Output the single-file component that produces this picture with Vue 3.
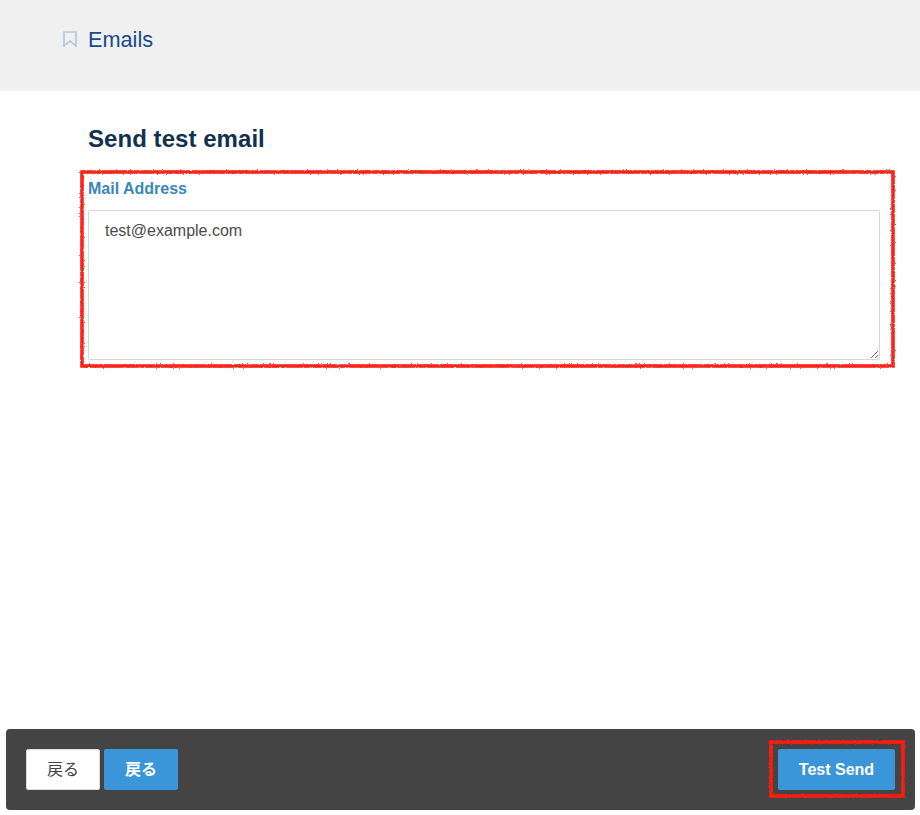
<script setup>
import { ref } from 'vue';

const mailAddress = ref('test@example.com');
</script>

<template>
  <div class="page">
    <header class="page-header">
      <svg class="bookmark" width="14" height="16" viewBox="0 0 14 16" fill="none">
        <path d="M1 1h12v14L7 10.2 1 15z" stroke="#b6c9dd" stroke-width="1.7" />
      </svg>
      <span class="page-title">Emails</span>
    </header>

    <main class="content">
      <h2>Send test email</h2>
      <div class="field">
        <label for="mail">Mail Address</label>
        <textarea id="mail" v-model="mailAddress"></textarea>
        <!-- red annotation around the field -->
        <svg class="mark mark-field" width="818" height="201" viewBox="0 0 818 201" fill="none">
          <defs>
            <filter id="rough" x="-2%" y="-5%" width="104%" height="110%">
              <feTurbulence type="fractalNoise" baseFrequency="0.7" numOctaves="2" seed="3" />
              <feDisplacementMap in="SourceGraphic" scale="2.5" />
              <feGaussianBlur stdDeviation="0.4" />
            </filter>
          </defs>
          <rect x="3" y="3" width="811" height="194" stroke="#ff2416" stroke-width="3.6" filter="url(#rough)" />
        </svg>
      </div>
    </main>

    <footer class="action-bar">
      <div class="left-actions">
        <button class="btn btn-white">戻る</button>
        <button class="btn btn-blue btn-back">戻る</button>
      </div>
      <div class="right-actions">
        <button class="btn btn-blue btn-send">Test Send</button>
        <svg class="mark mark-send" width="138" height="60" viewBox="0 0 138 60" fill="none">
          <rect x="3" y="3" width="132" height="54" stroke="#ff1a10" stroke-width="3.6" filter="url(#rough)" />
        </svg>
      </div>
    </footer>
  </div>
</template>

<style>
html, body {
  margin: 0;
  background: #fff;
  overflow: hidden;
}
</style>

<style scoped>
.page {
  height: 815px;
  display: flex;
  flex-direction: column;
  font-family: "Liberation Sans", "Noto Sans CJK JP", sans-serif;
  color: #444;
}
.page-header {
  height: 91px;
  flex: none;
  box-sizing: border-box;
  background: #f0f0f0;
  padding: 28px 0 0 63px;
  display: flex;
  align-items: flex-start;
  gap: 11px;
}
.bookmark {
  margin-top: 3px;
}
.page-title {
  font-size: 21.7px;
  line-height: 24px;
  color: #174a8b;
}
.content {
  flex: 1;
  padding: 34px 40px 0 88px;
}
h2 {
  margin: 0;
  font-size: 24px;
  line-height: 28px;
  font-weight: bold;
  letter-spacing: 0.05px;
  color: #12304f;
}
.field {
  position: relative;
  margin-top: 26px;
  display: flex;
  flex-direction: column;
}
label {
  font-size: 16px;
  line-height: 20px;
  font-weight: bold;
  color: #3a87b8;
  margin-bottom: 11px;
}
textarea {
  box-sizing: border-box;
  height: 150px;
  padding: 10px 16px;
  border: 1px solid #d6d6d6;
  border-radius: 2px;
  outline: none;
  font-family: inherit;
  font-size: 16px;
  line-height: 20px;
  color: #4c4c4c;
  resize: vertical;
}
.mark {
  position: absolute;
  pointer-events: none;
}
.mark-field {
  left: -9px;
  top: -10px;
}
.action-bar {
  flex: none;
  height: 81px;
  margin: 0 5px 5px 6px;
  box-sizing: border-box;
  padding: 20px;
  background: #444;
  border-radius: 4px;
  display: flex;
  justify-content: space-between;
}
.left-actions {
  display: flex;
  gap: 4px;
}
.right-actions {
  position: relative;
}
.btn {
  height: 41px;
  width: 74px;
  border: none;
  border-radius: 2px;
  padding: 0;
  font-family: inherit;
  font-size: 16px;
  cursor: pointer;
}
.btn-white {
  background: #fff;
  border: 1px solid #ddd;
  color: #444;
  padding-bottom: 4px;
}
.btn-blue {
  background: #3a96d8;
  color: #fff;
  font-weight: bold;
}
.btn-back {
  padding-bottom: 4px;
}
.btn-send {
  width: 117px;
}
.mark-send {
  left: -10px;
  top: -10px;
}
</style>
